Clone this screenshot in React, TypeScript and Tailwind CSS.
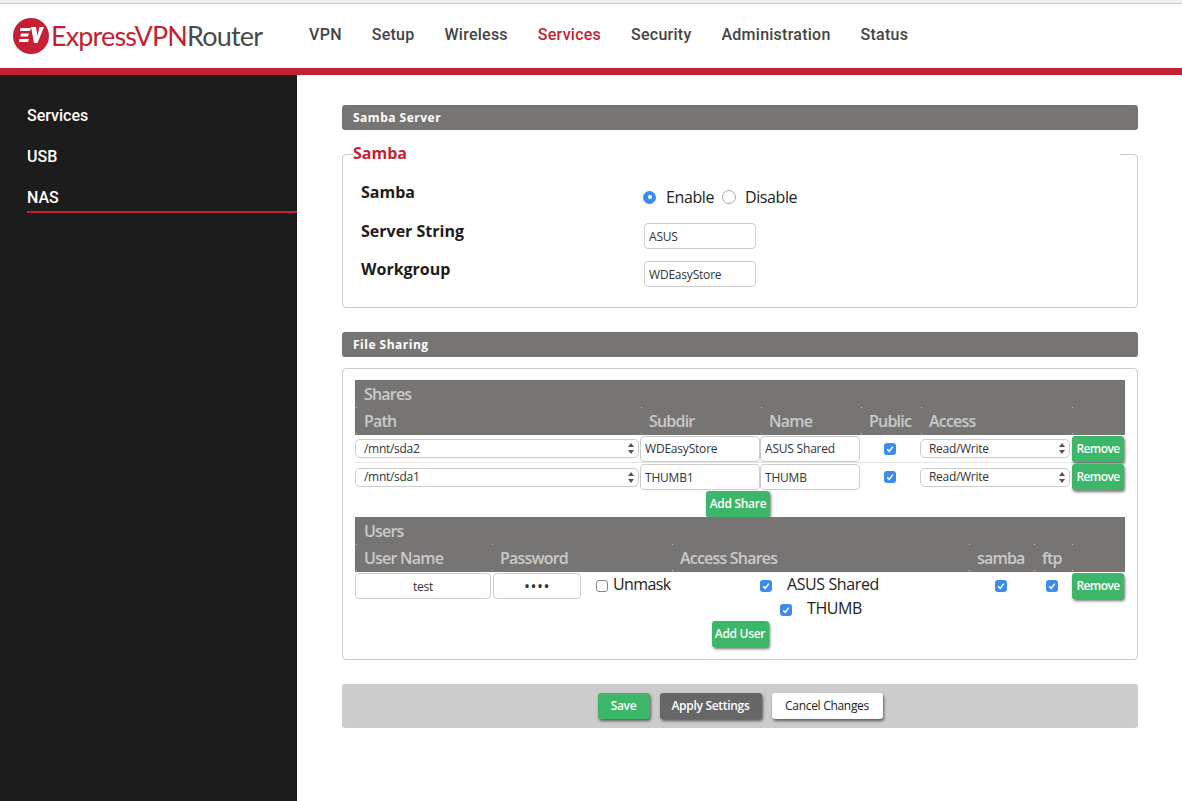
const sans = "font-['Open_Sans',sans-serif]";

function Check({ className = "" }: { className?: string }) {
  return (
    <span className={`flex h-3 w-3 shrink-0 items-center justify-center rounded-[3px] bg-[#3b8ced] ${className}`}>
      <svg viewBox="0 0 12 12" className="h-3 w-3" fill="none" stroke="white" strokeWidth="1.5">
        <path d="M3.2 6.4 5.2 8.4 8.8 3.6" />
      </svg>
    </span>
  );
}

function Btn({ label, className }: { label: string; className: string }) {
  return (
    <button
      className={`h-[26px] rounded-[3px] text-xs font-semibold tracking-[-0.3px] shadow-[1px_2px_3px_rgba(0,0,0,0.55)] ${className}`}
    >
      {label}
    </button>
  );
}

function Green({ label, className }: { label: string; className: string }) {
  return <Btn label={label} className={`bg-[#3cb668] text-white ${className}`} />;
}

function Select({ value, className }: { value: string; className: string }) {
  return (
    <div
      className={`flex h-[19px] items-center justify-between rounded-[5px] border border-[#ccc] bg-white pl-2 pr-1 text-xs tracking-[-0.3px] text-[#333] ${className}`}
    >
      {value}
      <svg viewBox="0 0 6 11" className="h-[11px] w-[6px]" fill="#555">
        <path d="M3 0 6 4H0zM3 11 0 7h6z" />
      </svg>
    </div>
  );
}

function Field({ value, className }: { value: string; className: string }) {
  return (
    <input
      readOnly
      value={value}
      className={`h-[26px] rounded-[4px] border border-[#ccc] bg-white px-1 text-xs tracking-[-0.2px] text-[#333] outline-none ${className}`}
    />
  );
}

function Bar({ title }: { title: string }) {
  return (
    <div className="flex h-[25px] items-center rounded-[3px] bg-[#777573] px-[11px] text-xs font-bold tracking-[0.5px] text-white">
      {title}
    </div>
  );
}

// header cell of the shares/users tables, with the tiny corner specks of the collapsed borders
function Th({ label }: { label?: string }) {
  return (
    <div className="relative h-[28px] pl-[9px] leading-[28px]">
      {label}
      <i className="absolute left-px top-0 h-px w-px bg-white/50" />
      <i className="absolute bottom-px left-px h-px w-px bg-white/60" />
    </div>
  );
}

function TableHead({ title, cols, labels }: { title: string; cols: string; labels: string[] }) {
  return (
    <div className="h-[55px] bg-[#777573] text-base font-semibold tracking-[-0.8px] text-[#c9c9c9]">
      <div className="h-[27px] pl-[9px] leading-[28px]">{title}</div>
      <div className={`grid ${cols}`}>
        {labels.map((l, i) => (
          <Th key={i} label={l} />
        ))}
      </div>
    </div>
  );
}

function Logo() {
  return (
    <div className="flex items-center gap-[2px]">
      <svg viewBox="0 0 36 36" className="h-9 w-9">
        <circle cx="18" cy="18" r="18" fill="#c41f33" />
        <g fill="white">
          <path d="M7.500 10H18l-1 3H7zM8 15.500h8l-1 3H7.500zM6.500 21H16l-1 3H6z" />
          <path d="M18 9h5l1.500 9L26.500 9H31l-6.500 16H21z" />
        </g>
      </svg>
      <span className="font-['Lato',sans-serif] text-[27px] tracking-[-0.85px] text-[#c41f33]">
        ExpressVPN<span className="text-[#4a4a4a]">Router</span>
      </span>
    </div>
  );
}

const navItems = ["VPN", "Setup", "Wireless", "Services", "Security", "Administration", "Status"];

export default function App() {
  return (
    <div className={`flex h-[801px] flex-col overflow-hidden bg-white ${sans}`}>
      <div className="h-[4px] shrink-0 border-b border-[#ccc] bg-[#eeeeee]" />
      <header className="flex h-[64px] shrink-0 items-center pl-[13px]">
        <Logo />
        <nav className="mb-[2px] ml-[47px] flex gap-[30px] font-['Roboto',sans-serif] text-base font-medium tracking-[0.25px] text-[#444]">
          {navItems.map((n) => (
            <span key={n} className={n === "Services" ? "text-[#c41f33]" : ""}>
              {n}
            </span>
          ))}
        </nav>
      </header>
      <div className="h-[7px] shrink-0 bg-[#c41f33]" />

      <div className="flex min-h-0 flex-1">
        <aside className="w-[297px] shrink-0 bg-[#1c1c1c] pl-[27px] pt-[24px] font-['Roboto',sans-serif] text-base font-medium text-white">
          <div className="h-[41px] leading-[34px]">Services</div>
          <div className="h-[41px] leading-[34px]">USB</div>
          <div className="h-[32px] border-b-2 border-[#c41f33] leading-[34px]">NAS</div>
        </aside>

        <main className="ml-[45px] w-[796px] pt-[30px]">
          <Bar title="Samba Server" />

          <fieldset className="mt-[15px] h-[163px] rounded-[4px] border border-[#ccc] pl-[18px]">
            <legend className="-ml-[8px] w-[767px] pb-[2px] text-base font-bold leading-[16px] text-[#c41f33]">
              Samba
            </legend>
            <div className="mt-[17px] flex h-[39px] items-start">
              <span className="w-[283px] text-base font-bold text-[#1c1c1c]">Samba</span>
              <span className="-ml-px mt-[5px] flex items-center text-base tracking-[-0.4px] text-[#222]">
                <span className="flex h-[13px] w-[13px] items-center justify-center rounded-full bg-[#3b8ced]">
                  <span className="h-1 w-1 rounded-full bg-white" />
                </span>
                <span className="ml-[10px]">Enable</span>
                <span className="ml-[8px] h-[14px] w-[14px] rounded-full border border-[#aaa]" />
                <span className="ml-[9px]">Disable</span>
              </span>
            </div>
            <div className="flex h-[38px] items-start">
              <span className="w-[283px] text-base font-bold text-[#1c1c1c]">Server String</span>
              <Field value="ASUS" className="mt-[4px] w-[112px]" />
            </div>
            <div className="flex items-start">
              <span className="w-[283px] text-base font-bold text-[#1c1c1c]">Workgroup</span>
              <Field value="WDEasyStore" className="mt-[4px] w-[112px]" />
            </div>
          </fieldset>

          <div className="mt-[24px]">
            <Bar title="File Sharing" />
          </div>

          <div className="mt-[11px] flex h-[292px] flex-col rounded-[4px] border border-[#ccc] px-3 pt-[11px]">
            <TableHead
              title="Shares"
              cols="grid-cols-[285px_120px_100px_60px_151px_54px]"
              labels={["Path", "Subdir", "Name", "Public", "Access", ""]}
            />

            {["/mnt/sda2", "/mnt/sda1"].map((path, i) => (
              <div
                key={path}
                className={`grid h-[28px] grid-cols-[285px_120px_100px_60px_151px_54px] items-center ${i === 0 ? "border-b border-[#e5e5e5]" : ""}`}
              >
                <Select value={path} className="w-[284px]" />
                <Field value={i === 0 ? "WDEasyStore" : "THUMB1"} className="w-[120px]" />
                <Field value={i === 0 ? "ASUS Shared" : "THUMB"} className="w-[100px]" />
                <span className="flex justify-center">
                  <Check />
                </span>
                <Select value="Read/Write" className="w-[150px]" />
                <Green label="Remove" className="ml-px w-[52px] tracking-[-0.6px]" />
              </div>
            ))}

            <div className="flex h-[26px] justify-center pr-[4px]">
              <Green label="Add Share" className="w-[64px]" />
            </div>

            <TableHead
              title="Users"
              cols="grid-cols-[136px_180px_297px_65px_38px_54px]"
              labels={["User Name", "Password", "Access Shares", "samba", "ftp", ""]}
            />

            <div className="flex pt-px">
              <Field value="test" className="w-[136px] text-center" />
              <Field value="••••" className="ml-[2px] w-[88px] text-center text-base! tracking-[0.5px]!" />
              <span className="ml-[15px] mt-[7px] h-3 w-3 rounded-[3px] border border-[#888]" />
              <span className="ml-[5px] w-[62px] text-base leading-[22px] tracking-[-0.6px] text-[#222]">Unmask</span>
              <div className="ml-[85px] w-[223px] text-base tracking-[-0.4px] text-[#222]">
                <div className="flex h-[24px] items-center">
                  <Check className="mt-[2px]" />
                  <span className="mb-[2px] ml-[15px]">ASUS Shared</span>
                </div>
                <div className="ml-[20px] flex h-[24px] items-center">
                  <Check className="mt-[2px]" />
                  <span className="mb-[2px] ml-[15px]">THUMB</span>
                </div>
              </div>
              <Check className="ml-[12px] mt-[7px]" />
              <Check className="ml-[39px] mt-[7px]" />
              <Green label="Remove" className="ml-[14px] w-[52px] tracking-[-0.6px]" />
            </div>

            <div className="flex justify-center">
              <Green label="Add User" className="w-[57px]" />
            </div>
          </div>

          <div className="mt-[24px] flex h-[44px] items-center justify-center gap-[10px] rounded-[3px] bg-[#cccccc]">
            <Green label="Save" className="w-[52px]" />
            <Btn label="Apply Settings" className="w-[102px] bg-[#666] text-white" />
            <Btn label="Cancel Changes" className="w-[111px] bg-white font-normal! text-[#222]" />
          </div>
        </main>
      </div>
    </div>
  );
}
